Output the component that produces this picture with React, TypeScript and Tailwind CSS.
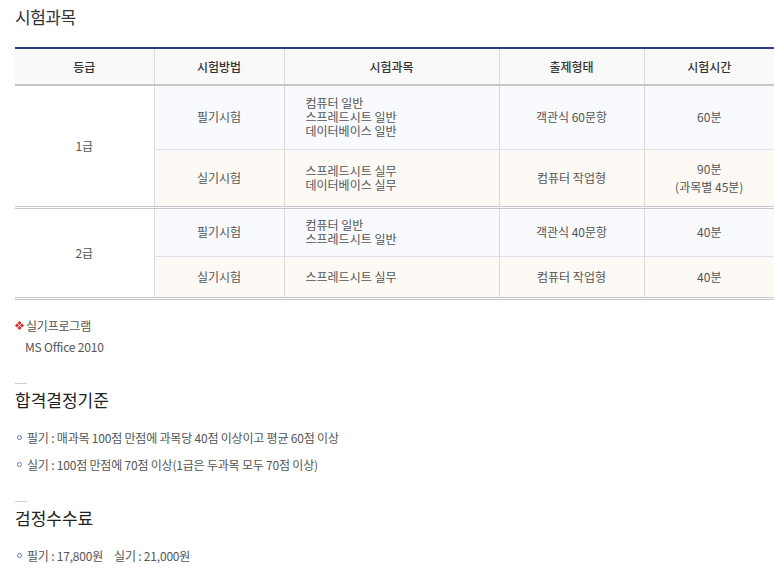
const font = { fontFamily: '"Noto Sans CJK KR", "Noto Sans", sans-serif' };

const Bullet = ({ children }: { children: React.ReactNode }) => (
  <p className="flex items-center text-[12px] leading-[18px] tracking-[-0.2px] text-[#555]">
    <span className="mr-[5px] ml-[2px] inline-block h-[5px] w-[5px] rounded-full border border-[#6a79b8]" />
    {children}
  </p>
);

const Section = ({ title, top }: { title: string; top: string }) => (
  <div className={top}>
    <div className="h-px w-[12px] bg-[#cfcfcf]" />
    <h3 className="mt-[4px] text-[17px] leading-[24px] text-[#222]">{title}</h3>
  </div>
);

const cell = 'border-r border-[#dcdcdc] text-center align-middle';

export default function App() {
  return (
    <div className="w-[774px] bg-white pl-[15px]" style={font}>
      <h2 className="pt-[5px] text-[17px] leading-[24px] tracking-[-0.5px] text-[#333]">시험과목</h2>

      <table className="mt-[18px] w-[759px] table-fixed border-collapse text-[12px] text-[#555]">
        <colgroup>
          <col className="w-[139px]" />
          <col className="w-[130px]" />
          <col className="w-[215px]" />
          <col className="w-[145px]" />
          <col className="w-[130px]" />
        </colgroup>
        <thead>
          <tr className="h-[37px] border-t-2 border-b-2 border-t-[#2c3e7a] border-b-[#c6c6c6] bg-[#f9f9f9] text-[#333]">
            <th className={`${cell} font-medium`}>등급</th>
            <th className={`${cell} font-medium`}>시험방법</th>
            <th className={`${cell} font-medium`}>시험과목</th>
            <th className={`${cell} font-medium`}>출제형태</th>
            <th className="text-center font-medium">시험시간</th>
          </tr>
        </thead>
        <tbody className="leading-[14px]">
          <tr className="h-[64px] border-b border-[#dde2ea] bg-[#f8fafd]">
            <td rowSpan={2} className={`${cell} bg-white`}>1급</td>
            <td className={cell}>필기시험</td>
            <td className="border-r border-[#dcdcdc] pl-[21px] text-left align-middle">
              컴퓨터 일반<br />스프레드시트 일반<br />데이터베이스 일반
            </td>
            <td className={cell}>객관식 60문항</td>
            <td className="text-center">60분</td>
          </tr>
          <tr className="h-[58px] border-b-[3px] border-double border-[#c8c8c8] bg-[#fdfaf6]">
            <td className={cell}>실기시험</td>
            <td className="border-r border-[#dcdcdc] pl-[21px] text-left align-middle">
              스프레드시트 실무<br />데이터베이스 실무
            </td>
            <td className={cell}>컴퓨터 작업형</td>
            <td className="text-center leading-[18px]">90분<br />(과목별 45분)</td>
          </tr>
          <tr className="h-[49px] border-b border-[#dde2ea] bg-[#f8fafd]">
            <td rowSpan={2} className={`${cell} bg-white`}>2급</td>
            <td className={cell}>필기시험</td>
            <td className="border-r border-[#dcdcdc] pl-[21px] text-left align-middle">
              컴퓨터 일반<br />스프레드시트 일반
            </td>
            <td className={cell}>객관식 40문항</td>
            <td className="text-center">40분</td>
          </tr>
          <tr className="h-[42px] border-b-[3px] border-double border-[#c8c8c8] bg-[#fdfaf6]">
            <td className={cell}>실기시험</td>
            <td className="border-r border-[#dcdcdc] pl-[21px] text-left align-middle">스프레드시트 실무</td>
            <td className={cell}>컴퓨터 작업형</td>
            <td className="text-center">40분</td>
          </tr>
        </tbody>
      </table>

      <div className="mt-[17px] text-[12px] leading-[18px] tracking-[-0.2px] text-[#555]">
        <p className="flex items-center">
          <svg width="9" height="9" viewBox="0 0 9 9" className="mr-[2px]">
            <path d="M4.5 0L6.5 2L4.5 4L2.5 2Z M4.5 5L6.5 7L4.5 9L2.5 7Z M2 2.5L4 4.5L2 6.5L0 4.5Z M7 2.5L9 4.5L7 6.5L5 4.5Z" fill="#d8262b" />
          </svg>
          실기프로그램
        </p>
        <p className="mt-[3px] pl-[10px]">MS Office 2010</p>
      </div>

      <Section title="합격결정기준" top="mt-[27px]" />
      <div className="mt-[17px] flex flex-col gap-[9px]">
        <Bullet>필기 : 매과목 100점 만점에 과목당 40점 이상이고 평균 60점 이상</Bullet>
        <Bullet>실기 : 100점 만점에 70점 이상(1급은 두과목 모두 70점 이상)</Bullet>
      </div>

      <Section title="검정수수료" top="mt-[27px]" />
      <div className="mt-[17px] pb-[12px]">
        <Bullet>
          필기 : 17,800원<span className="ml-[11px]">실기 : 21,000원</span>
        </Bullet>
      </div>
    </div>
  );
}
